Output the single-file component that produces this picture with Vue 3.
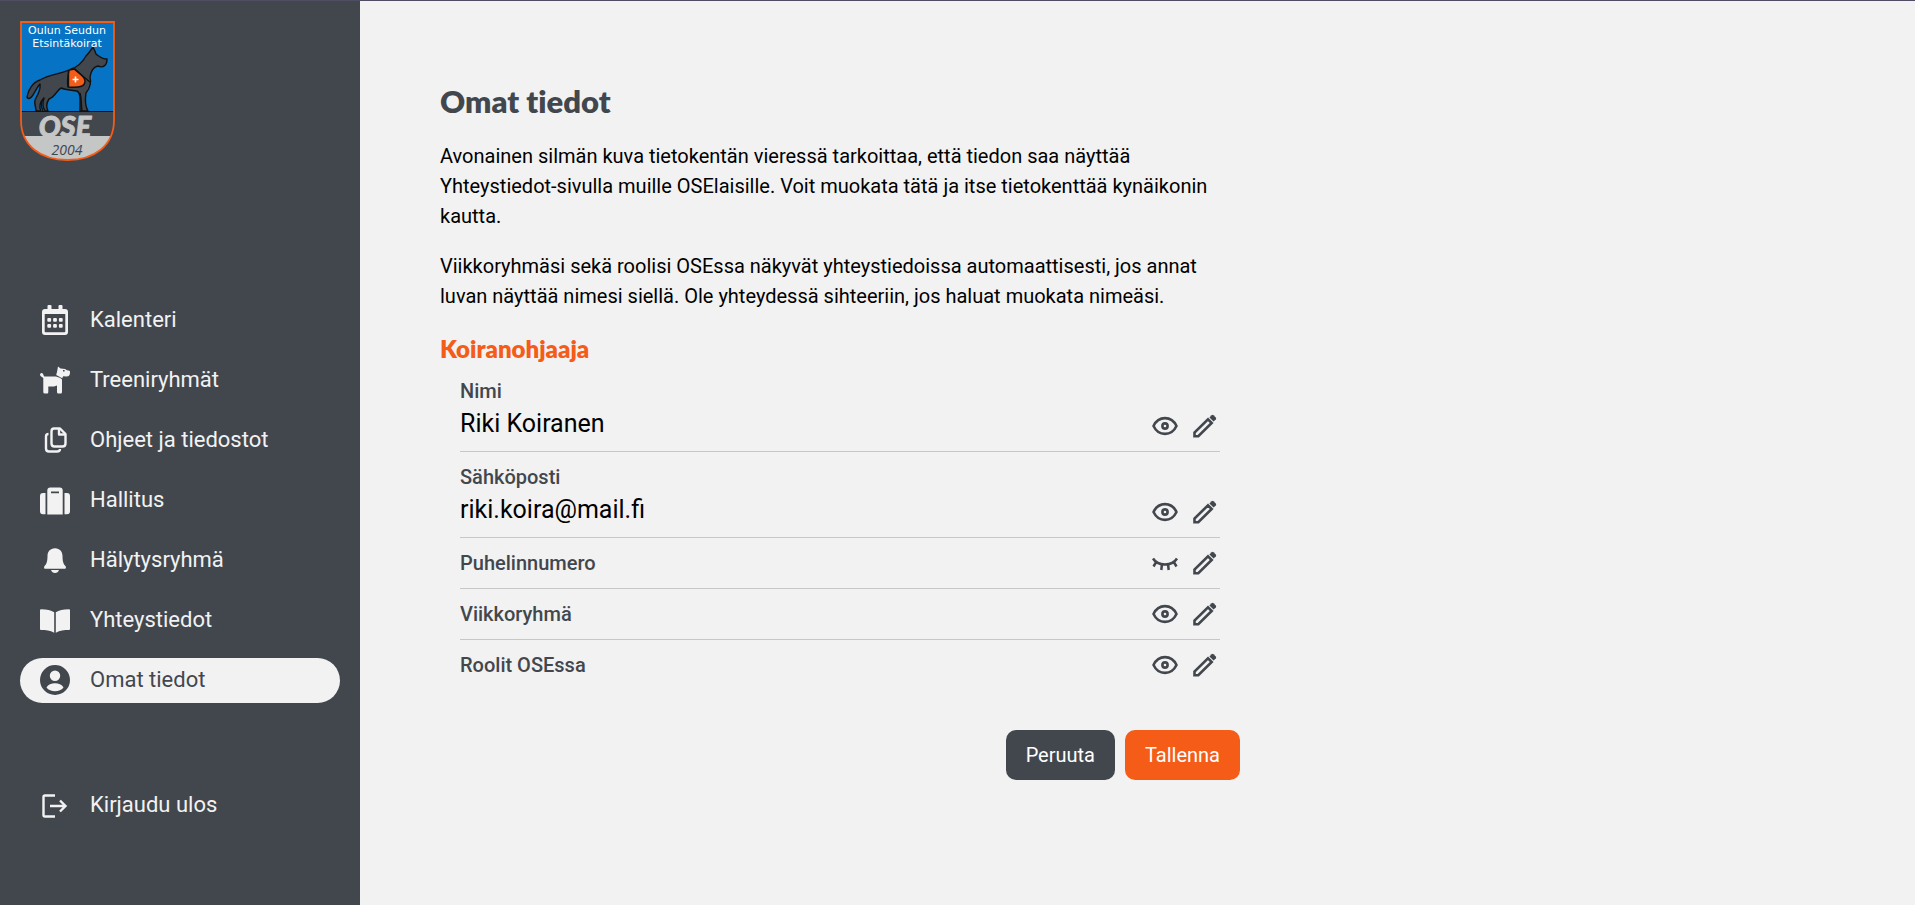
<script setup>
const navItems = [
  { id: 'calendar', label: 'Kalenteri' },
  { id: 'dog', label: 'Treeniryhmät' },
  { id: 'files', label: 'Ohjeet ja tiedostot' },
  { id: 'suitcase', label: 'Hallitus' },
  { id: 'bell', label: 'Hälytysryhmä' },
  { id: 'book', label: 'Yhteystiedot' },
  { id: 'person', label: 'Omat tiedot', active: true },
]

const fields = [
  { label: 'Nimi', value: 'Riki Koiranen', visible: true },
  { label: 'Sähköposti', value: 'riki.koira@mail.fi', visible: true },
  { label: 'Puhelinnumero', value: '', visible: false },
  { label: 'Viikkoryhmä', value: '', visible: true },
  { label: 'Roolit OSEssa', value: '', visible: true },
]
</script>

<template>
  <div class="app">
    <aside class="sidebar">
      <a class="logo" href="#" aria-label="Etusivu">
        <svg width="96" height="141" viewBox="0 0 96 141">
          <defs>
            <clipPath id="shield">
              <path d="M1 1H94V99C94 125 74 139 47.500 139C21 139 1 125 1 99Z" />
            </clipPath>
          </defs>
          <g clip-path="url(#shield)">
            <rect width="96" height="92" fill="#0673c4" />
            <rect y="91" width="96" height="25" fill="#42474e" />
            <rect y="115" width="96" height="26" fill="#c5c6c6" />
            <path d="M0 90.500H96" stroke="#111" stroke-width="1.200" />
          </g>
          <g stroke="#111" stroke-width="1.400" stroke-linejoin="round">
            <path fill="#42474e" d="M20 59C13 61 8 69 7 76C8 79 11 77 13 74C16 69 18 65 20 63C21 69 18 73 15 79C14 83 16 86 16 90H21C19 86 20 81 24 77C22 83 23 87 25 90H28C26 86 27 81 29 78C35 76 37 69 41 67C46 69 52 69 57 70C61 72 60 79 60 90H68C65 85 65 78 66 72C71 66 71 60 70 56C71 50 73 46 78 45C80 46 83 46 84 45C86 44 87 41 87 38C82 38 80 36 76 33C75 30 74 28 73 26C71 29 69 32 66 35C62 42 58 46 51 48C42 53 29 53 20 59Z" />
            <path fill="none" d="M24 77C20 81 21 86 23 90M60 72C62 79 61 85 62 90" />
            <path fill="#f45c18" d="M49 49L55 48C59 52 65 56 65 60C65 65 61 67 48 66C47 61 48 54 49 49Z" />
            <path d="M48.500 49V66M54 48L70 61" fill="none" />
          </g>
          <path d="M55.500 55.500V61.500M52.500 58.500H58.500" stroke="#fff" stroke-width="1.600" />
          <path d="M1 1H94V99C94 125 74 139 47.500 139C21 139 1 125 1 99Z" fill="none" stroke="#f45c18" stroke-width="1.800" />
          <text x="47" y="13" class="logo-name">Oulun Seudun</text>
          <text x="47" y="26" class="logo-name">Etsintäkoirat</text>
          <text x="45" y="116" class="logo-ose">OSE</text>
          <text x="47" y="134" class="logo-year">2004</text>
        </svg>
      </a>

      <nav class="nav" aria-label="Päävalikko">
        <a
          v-for="item in navItems"
          :key="item.id"
          href="#"
          class="nav-link"
          :class="{ active: item.active }"
          :aria-current="item.active ? 'page' : null"
        >
          <svg class="icon" viewBox="0 0 30 30" aria-hidden="true">
            <template v-if="item.id === 'calendar'">
              <path fill-rule="evenodd" d="M5 4H7.500V1Q7.500 0 8.500 0H10.500Q11.500 0 11.500 1V4H18.500V1Q18.500 0 19.500 0H21.500Q22.500 0 22.500 1V4H25Q28 4 28 7V27Q28 30 25 30H5Q2 30 2 27V7Q2 4 5 4ZM4.700 9V26.500Q4.700 27.300 5.500 27.300H24.500Q25.300 27.300 25.300 26.500V9Z" />
              <g v-for="y in [13, 19]" :key="y">
                <rect v-for="x in [7.300, 13.100, 18.900]" :key="x" :x="x" :y="y" width="3.800" height="3.800" rx="1" />
              </g>
            </template>
            <template v-else-if="item.id === 'dog'">
              <path d="M1.700 8Q0 8 0 9.600C0 11.500 2 12 3.300 13V27Q3.300 28.500 4.700 28.500H7.200Q8.300 28.500 8.300 27V21.500H14L17 20.500V27Q17 28.500 18.300 28.500H20.800Q22 28.500 22 27V14.500C20.500 12.500 17.500 12 16 11.500H5.500C4 11.500 3.800 11 3.400 9.700Q3 8 1.700 8Z" />
              <path fill-rule="evenodd" d="M18 1.500L20.600 3.500L25.200 4C26 5.500 28 5.500 29.500 5.700Q30 6 30 7.500C30 10 29 11.500 26.500 11.500L23.200 11.200L22.200 13.200L16.200 10L17 7ZM23 4.900V6.400H24.600V4.900Z" />
            </template>
            <g v-else-if="item.id === 'files'" fill="none" stroke="currentColor" stroke-width="2.400" stroke-linejoin="round">
              <path d="M14 3.500H20L25.500 9V18.500Q25.500 21.500 22.500 21.500H14.500Q11.500 21.500 11.500 18.500V6.500Q11.500 3.500 14 3.500Z" />
              <path d="M19 4V9.500H25M8.500 9Q6 9 6 11.500V23.500Q6 26.500 9 26.500H17Q20 26.500 20 24" />
            </g>
            <template v-else-if="item.id === 'suitcase'">
              <path d="M3 8H5.500V29.300H3Q0 29.300 0 26.300V11Q0 8 3 8ZM24.500 8H27Q30 8 30 11V26.300Q30 29.300 27 29.300H24.500Z" />
              <path fill-rule="evenodd" d="M7.300 29.500V5.500Q7.300 2.500 10.300 2.500H19.700Q22.700 2.500 22.700 5.500V29.500ZM11 6.500V8.200H19V6.500Z" />
            </template>
            <template v-else-if="item.id === 'bell'">
              <path d="M15 3.300C20 3.300 22.500 7 22.500 11C22.500 17 23.500 19 25.800 21.500Q26.500 23.800 25 23.800H5Q3.500 23.800 4.200 21.500C6.500 19 7.500 17 7.500 11C7.500 7 10 3.300 15 3.300Z" />
              <path d="M11 25H19Q18 27.900 15 27.900Q12 27.900 11 25Z" />
            </template>
            <path
              v-else-if="item.id === 'book'"
              d="M14.200 7.300V27.700C10 25.500 6 25 1 25Q0 25 0 24V5.300Q0 4.300 1 4.300C7 4.500 11 5.200 14.200 7.300ZM15.800 7.300C19 5.200 23 4.500 29 4.300Q30 4.300 30 5.300V24Q30 25 29 25C24 25 20 25.500 15.800 27.700Z"
            />
            <path
              v-else
              fill-rule="evenodd"
              d="M15 0A15 15 0 1 1 15 30A15 15 0 1 1 15 0ZM15 5.500A5.200 5.200 0 1 0 15 15.900A5.200 5.200 0 1 0 15 5.500ZM6.500 22.500C8.500 25 11.500 26.300 15 26.300C18.500 26.300 21.500 25 23.500 22.500C22 19.500 18.500 18.300 15 18.300C11.500 18.300 8 19.500 6.500 22.500Z"
            />
          </svg>
          <span>{{ item.label }}</span>
        </a>
      </nav>

      <a class="nav-link logout" href="#">
        <svg class="icon" viewBox="0 0 30 30" aria-hidden="true">
          <g fill="none" stroke="currentColor" stroke-width="2.400">
            <path d="M15 5.500H5Q3.500 5.500 3.500 7V25Q3.500 26.500 5 26.500H15" />
            <path d="M10 16H25.500M20 10.500L25.500 16L20 21.500" />
          </g>
        </svg>
        <span>Kirjaudu ulos</span>
      </a>
    </aside>

    <main class="content">
      <div class="profile">
        <h1>Omat tiedot</h1>
        <p>
          Avonainen silmän kuva tietokentän vieressä tarkoittaa, että tiedon saa näyttää
          Yhteystiedot-sivulla muille OSElaisille. Voit muokata tätä ja itse tietokenttää
          kynäikonin kautta.
        </p>
        <p>
          Viikkoryhmäsi sekä roolisi OSEssa näkyvät yhteystiedoissa automaattisesti, jos annat
          luvan näyttää nimesi siellä. Ole yhteydessä sihteeriin, jos haluat muokata nimeäsi.
        </p>

        <h2>Koiranohjaaja</h2>
        <ul class="fields">
          <li v-for="field in fields" :key="field.label" class="field">
            <div class="field-text">
              <span class="field-label">{{ field.label }}</span>
              <span v-if="field.value" class="field-value">{{ field.value }}</span>
            </div>
            <div class="field-actions">
              <button type="button" class="icon-button" :aria-label="`Näkyvyys: ${field.label}`">
                <svg class="icon" viewBox="0 0 30 30" aria-hidden="true">
                  <g v-if="field.visible" fill="none" stroke="currentColor" stroke-width="2.600">
                    <path d="M3.500 15C8.500 4.500 21.500 4.500 26.500 15C21.500 25.500 8.500 25.500 3.500 15Z" stroke-linejoin="round" />
                    <circle cx="15" cy="15" r="2.600" />
                  </g>
                  <path
                    v-else
                    fill="none"
                    stroke="currentColor"
                    stroke-width="2.500"
                    d="M3 10.500C8 18.500 22 18.500 27 10.500M6.500 13.500L3.500 18.500M12 16L11.300 22M18 16L18.700 22M23.500 13.500L26.500 18.500"
                  />
                </svg>
              </button>
              <button type="button" class="icon-button" :aria-label="`Muokkaa: ${field.label}`">
                <svg class="icon" viewBox="0 0 30 30" aria-hidden="true">
                  <path d="M4.500 25.200V21.500L18 8.300L21.700 12L8.300 25.200Z" fill="none" stroke="currentColor" stroke-width="2.600" />
                  <path d="M19.400 6.400L21.600 4.200Q22.500 3.400 23.500 4.200L25.800 6.500Q26.600 7.500 25.800 8.400L23.600 10.600Z" />
                </svg>
              </button>
            </div>
          </li>
        </ul>

        <div class="form-actions">
          <button type="button" class="button">Peruuta</button>
          <button type="button" class="button primary">Tallenna</button>
        </div>
      </div>
    </main>
  </div>
</template>

<style>
body {
  background: #f2f2f2;
}
</style>

<style scoped>
.app {
  box-sizing: border-box;
  display: flex;
  min-height: 100vh;
  border-top: 1px solid #4f4d63;
  background: #f2f2f2;
  color: #000;
  font: 20px/30px Roboto, sans-serif;
}

.sidebar {
  box-sizing: border-box;
  flex: 0 0 360px;
  display: flex;
  flex-direction: column;
  padding: 20px;
  background: #42474e;
}

.logo {
  align-self: flex-start;
  margin-bottom: 136px;
}

.logo svg {
  display: block;
}

.logo text {
  text-anchor: middle;
}

.logo-name {
  font: 11px "DejaVu Sans", sans-serif;
  fill: #fff;
}

.logo-ose {
  font: italic 900 29px Lato, sans-serif;
  fill: #c5c6c6;
  stroke: #c5c6c6;
  stroke-linejoin: round;
}

.logo-year {
  font: italic 14px "Open Sans", sans-serif;
  fill: #42474e;
}

.nav {
  display: flex;
  flex-direction: column;
  gap: 15px;
}

.nav-link {
  display: flex;
  align-items: center;
  gap: 20px;
  padding: 7px 20px 8px;
  border-radius: 24px;
  color: #f2f2f2;
  font-size: 22px;
  text-decoration: none;
}

.nav-link.active {
  background: #f2f2f2;
  color: #42474e;
}

.logout {
  margin-top: 80px;
}

.icon {
  display: block;
  flex: none;
  width: 30px;
  height: 30px;
  fill: currentColor;
}

.content {
  flex: 1;
  min-width: 0;
  padding: 80px;
}

.profile {
  max-width: 800px;
}

h1,
h2 {
  margin: 0;
  font-family: Lato, sans-serif;
  font-weight: 800;
  font-variant-ligatures: none;
}

h1 {
  margin-bottom: 20px;
  color: #42474e;
  font-size: 31px;
  line-height: 40px;
}

h2 {
  color: #f45c18;
  font-size: 24px;
  line-height: 35px;
}

p {
  max-width: 780px;
  margin: 0 0 20px;
}

.fields {
  margin: 0;
  padding: 0 20px;
  list-style: none;
}

.field {
  display: flex;
  align-items: flex-end;
  justify-content: space-between;
  padding: 10px 0;
}

.field + .field {
  border-top: 1px solid #c6c7c8;
}

.field-text {
  display: flex;
  flex-direction: column;
}

.field-label {
  color: #42474e;
  font-weight: 500;
}

.field-value {
  font-size: 25px;
  line-height: 35px;
}

.field-actions {
  display: flex;
  gap: 10px;
}

.icon-button {
  padding: 0;
  border: 0;
  background: none;
  color: #42474e;
  cursor: pointer;
}

.form-actions {
  display: flex;
  justify-content: flex-end;
  gap: 10px;
  margin-top: 40px;
}

.button {
  height: 50px;
  padding: 0 20px;
  border: 0;
  border-radius: 10px;
  background: #42474e;
  color: #fff;
  font: inherit;
  cursor: pointer;
}

.button.primary {
  background: #f45c18;
}
</style>
